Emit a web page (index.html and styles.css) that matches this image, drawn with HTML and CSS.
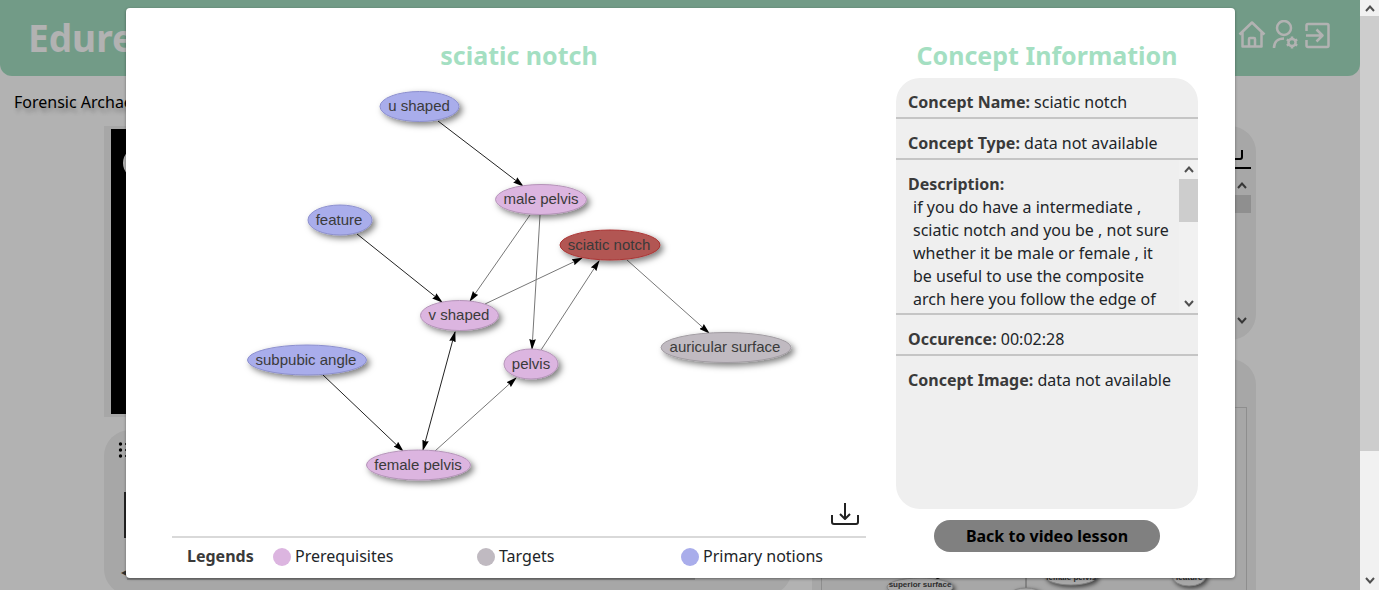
FILE: index.html
```html
<!DOCTYPE html>
<html lang="en">
<head>
<meta charset="utf-8">
<title>Edurell - sciatic notch</title>
<link rel="stylesheet" href="styles.css">
</head>
<body>
<div class="viewport">
  <div class="page">
    <header class="topbar">
      <div class="brand">Edurell</div>
      <nav class="topnav">
        <a href="#" aria-label="Home"><svg width="28" height="30" viewBox="0 0 28 30"><path d="M1.500 14.500L14 2.500l12.500 12M4.500 12v14.500h19V12M11 26.500v-7.500a1 1 0 0 1 1-1h4a1 1 0 0 1 1 1v7.500"/></svg></a>
        <a href="#" aria-label="Account settings"><svg width="28" height="30" viewBox="0 0 28 30"><circle cx="13" cy="8" r="7"/><path d="M3 28c0-6 4-9.500 10-9.500"/><circle cx="21" cy="22.500" r="3.600"/><path d="M21 16.500v2.500M21 26v2.500M15.800 19.500l2.200 1.200M24 24.300l2.200 1.200M15.800 25.500l2.200-1.200M24 20.700l2.200-1.200"/></svg></a>
        <a href="#" aria-label="Log out"><svg width="28" height="30" viewBox="0 0 28 30"><path d="M2.500 11V5.500a1.500 1.500 0 0 1 1.500-1.500h19a1.500 1.500 0 0 1 1.500 1.500v20a1.500 1.500 0 0 1-1.500 1.500h-19a1.500 1.500 0 0 1-1.500-1.500V20M2 15.500h16M12.500 9.500l6 6-6 6"/></svg></a>
      </nav>
    </header>
    <p class="lesson">Forensic Archaeology and Anthropology</p>
    <main class="columns">
      <div class="column">
        <section class="video"><div class="screen"><div class="avatar"></div></div></section>
        <section class="card transcript">
          <svg width="26" height="20" viewBox="0 0 26 20"><path class="list-lines" d="M7 4h18M7 10h18M7 16h18"/><circle cx="2.500" cy="4" r="1.700"/><circle cx="2.500" cy="10" r="1.700"/><circle cx="2.500" cy="16" r="1.700"/></svg>
          <div class="timeline"></div>
          <div class="hscroll"><span>◂</span><div class="hthumb"></div></div>
        </section>
      </div>
      <div class="column">
        <section class="card notes">
          <div class="notes-tools"><svg width="28" height="22" viewBox="0 0 28 22"><path d="M1 12v7a2 2 0 0 0 2 2h22a2 2 0 0 0 2-2v-7"/></svg></div>
          <div class="notes-body">
            <div class="scroll scroll-dim"><svg width="12" height="16" viewBox="0 0 12 16"><path d="M2 11l4-4.500 4 4.500"/></svg><div class="thumb"></div><svg width="12" height="16" viewBox="0 0 12 16"><path d="M2 6l4 4.500L10 6"/></svg></div>
          </div>
        </section>
        <section class="card map">
          <div class="map-frame">
            <svg class="minimap" viewBox="0 0 424 184" preserveAspectRatio="xMidYMin meet">
              <path d="M204 120v60" stroke="#888"/>
              <path d="M112 173l8-4-1-4z" fill="#000"/>
              <g class="mininode"><ellipse cx="98" cy="179" rx="33" ry="9"/><ellipse cx="204" cy="185" rx="14" ry="5"/><ellipse cx="249" cy="168" rx="26" ry="9"/><ellipse cx="367" cy="168" rx="17" ry="10"/></g>
              <text x="98" y="179">superior surface</text><text x="249" y="172">female pelvis</text><text x="367" y="172">feature</text>
            </svg>
          </div>
        </section>
      </div>
    </main>
    <div class="backdrop"></div>
    <div class="dialog" role="dialog" aria-labelledby="concept-title">
      <section class="graph-panel">
        <h2 id="concept-title">sciatic notch</h2>
        <svg class="graph" viewBox="172 78 694 418" role="img" aria-label="Concept graph">
          <defs>
            <marker id="arrow" viewBox="0 0 10 6" refX="9" refY="3" markerWidth="11" markerHeight="7" markerUnits="userSpaceOnUse" orient="auto-start-reverse"><path d="M0 0L10 3L0 6L1 3z" fill="#000"/></marker>
            <filter id="shadow" x="-20%" y="-30%" width="150%" height="190%"><feDropShadow dx="3" dy="3" stdDeviation="3" flood-opacity=".5"/></filter>
          </defs>
          <g class="edges" marker-end="url(#arrow)">
            <path class="strong" d="M438 121L523 186"/>
            <path class="strong" d="M357 234L442 302"/>
            <path class="strong" d="M323 375L403 451"/>
            <path class="strong both" d="M455 332L423 450"/>
            <path d="M530 215L470 301"/>
            <path d="M540 215L532 349"/>
            <path d="M485 304L582 258"/>
            <path d="M541 350L599 261"/>
            <path d="M435 451L516 378"/>
            <path d="M627 260L709 333"/>
          </g>
          <g class="nodes">
            <g class="primary"><ellipse cx="419.500" cy="106.500" rx="39.500" ry="15"/><ellipse cx="340" cy="220" rx="32" ry="15"/><ellipse cx="307" cy="360" rx="59.500" ry="15"/></g>
            <g class="prereq"><ellipse cx="541" cy="199.500" rx="45.500" ry="15"/><ellipse cx="459.500" cy="315.500" rx="39" ry="15"/><ellipse cx="531" cy="364" rx="27" ry="15"/><ellipse cx="418.500" cy="465" rx="52" ry="15"/></g>
            <g class="current"><ellipse cx="610" cy="245" rx="50" ry="15"/></g>
            <g class="target"><ellipse cx="726" cy="347.500" rx="65" ry="15"/></g>
          </g>
          <g class="labels">
            <text x="419" y="111">u shaped</text><text x="339" y="225">feature</text><text x="306" y="365">subpubic angle</text>
            <text x="541" y="204">male pelvis</text><text x="459" y="320">v shaped</text><text x="531" y="369">pelvis</text><text x="418" y="470">female pelvis</text>
            <text x="609" y="250">sciatic notch</text><text x="725" y="352">auricular surface</text>
          </g>
        </svg>
        <div class="graph-tools"><button class="download" aria-label="Download"><svg width="28" height="24" viewBox="0 0 28 24"><path d="M1 13v7a2 2 0 0 0 2 2h22a2 2 0 0 0 2-2v-7M14 1v15M9 12l5 5 5-5"/></svg></button></div>
        <div class="legend">
          <b>Legends</b>
          <span class="key"><i class="dot dot-prereq"></i>Prerequisites</span>
          <span class="key"><i class="dot dot-target"></i>Targets</span>
          <span class="key"><i class="dot dot-primary"></i>Primary notions</span>
        </div>
      </section>
      <section class="info-panel">
        <h2>Concept Information</h2>
        <div class="info">
          <div class="row"><b>Concept Name:</b> sciatic notch</div>
          <div class="row"><b>Concept Type:</b> data not available</div>
          <div class="row description">
            <div class="desc-text"><b>Description:</b><p>if you do have a intermediate ,<br>sciatic notch and you be , not sure<br>whether it be male or female , it<br>be useful to use the composite<br>arch here you follow the edge of</p></div>
            <div class="scroll"><svg width="12" height="16" viewBox="0 0 12 16"><path d="M2 11l4-4.500 4 4.500"/></svg><div class="thumb"></div><svg width="12" height="16" viewBox="0 0 12 16"><path d="M2 6l4 4.500L10 6"/></svg></div>
          </div>
          <div class="row"><b>Occurence:</b> 00:02:28</div>
          <div class="row"><b>Concept Image:</b> data not available</div>
        </div>
        <button class="back">Back to video lesson</button>
      </section>
    </div>
  </div>
  <div class="scroll window-scroll"><svg width="12" height="16" viewBox="0 0 12 16"><path d="M2 11l4-4.500 4 4.500"/></svg><div class="thumb"></div><svg width="12" height="16" viewBox="0 0 12 16"><path d="M2 6l4 4.500L10 6"/></svg></div>
</div>
</body>
</html>
```
FILE: styles.css
```css
* { box-sizing: border-box; }
body {
  margin: 0;
  font: 16px/23px "Noto Sans", "Open Sans", sans-serif;
  color: #212529;
  background: #fff;
}
h2, p { margin: 0; }
svg { display: block; fill: none; }
button { font: inherit; border: 0; padding: 0; cursor: pointer; }

.viewport { display: flex; height: 100vh; }
.page { position: relative; flex: 1; min-width: 0; overflow: hidden; display: flex; flex-direction: column; }

.topbar {
  display: flex;
  flex: none;
  justify-content: space-between;
  align-items: center;
  height: 76px;
  padding: 0 28px;
  background: #a4dfc2;
  border-radius: 0 0 12px 12px;
}
.brand { font-size: 37px; line-height: 52px; font-weight: 700; color: #fff; }
.topnav { display: flex; gap: 5px; padding-bottom: 6px; }
.topnav svg { stroke: #fff; stroke-width: 2.5; stroke-linejoin: round; }

.lesson { flex: none; padding: 15px 14px 12px; color: #000; text-shadow: 2px 4px 4px rgba(0, 0, 0, .3); }
.columns { flex: 1; min-height: 0; display: grid; grid-template-columns: 688fr 444fr; gap: 20px; padding: 0 104px; }
.column { display: flex; flex-direction: column; min-height: 0; }
.card { background: #efefef; border-radius: 26px; }
.video { padding: 3px 7px; height: 291px; flex: none; background: #efefef; }
.screen { height: 285px; padding: 18px 12px; background: #000; }
.avatar { width: 32px; height: 32px; border-radius: 50%; background: #fff; }
.transcript { flex: none; height: 165px; margin-top: 13px; padding: 10px 14px; }
.transcript svg { fill: #000; }
.transcript .list-lines { stroke: #000; stroke-width: 1.500; }
.timeline { height: 46px; margin: 32px 6px 0; border-left: 2px solid #333; }
.hscroll { display: flex; align-items: center; height: 17px; margin-top: 25px; padding-left: 3px; color: #444; font-size: 12px; }
.hthumb { width: 568px; height: 17px; background: #c1c1c1; }

.notes { flex: none; height: 214px; display: flex; flex-direction: column; padding: 20px 5px 10px 20px; }
.notes-tools { display: flex; justify-content: flex-end; padding: 0 8px 8px; border-bottom: 2px solid #000; height: 23px; }
.notes-tools svg { stroke: #000; stroke-width: 2; margin-top: -8px; }
.notes-body { flex: 1; display: flex; justify-content: flex-end; padding-top: 7px; }
.map { flex: 1; margin-top: 19px; padding: 48px 9px 0 9px; min-height: 0; overflow: hidden; border-radius: 26px 26px 0 0; }
.map-frame { height: 100%; border: 1px solid #ccc; border-bottom: 0; overflow: hidden; }
.mininode ellipse { fill: #efefef; stroke: #bbb; filter: drop-shadow(2px 2px 2px rgba(0, 0, 0, .6)); }
.minimap text { font: 700 8px "Liberation Sans", Arial, sans-serif; fill: #444; text-anchor: middle; }

.backdrop { position: absolute; inset: 0; background: rgba(0, 0, 0, .3); }
.dialog {
  position: absolute;
  inset: 8px 125px auto 126px;
  display: grid;
  grid-template-columns: 694fr 302fr;
  gap: 30px;
  padding: 31px 37px 10px 46px;
  background: #fff;
  border-radius: 4px;
  box-shadow: 0 1px 3px rgba(0, 0, 0, .4);
}
.dialog h2 { font-size: 25px; line-height: 32px; font-weight: 700; text-align: center; color: #a4dfc2; }
.dialog b { color: #3a3a3a; }

.graph { width: 100%; margin-top: 7px; }
.edges { stroke: #777; stroke-width: 1; }
.edges .strong { stroke: #222; }
.edges .both { marker-start: url(#arrow); }
.nodes > g { filter: url(#shadow); }
.nodes ellipse { stroke-width: 1; }
.primary { fill: #a9adeb; stroke: #8c8fce; }
.prereq { fill: #dcb5e0; stroke: #b493b8; }
.current { fill: #b25652; stroke: #a33; }
.target { fill: #c0bac1; stroke: #a19ca2; }
.labels text { font: 15px "Liberation Sans", Arial, sans-serif; fill: #3a3a3a; text-anchor: middle; }

.graph-tools { display: flex; justify-content: flex-end; padding: 6px 7px 10px; }
.download { background: none; }
.download svg { stroke: #222; stroke-width: 2; stroke-linejoin: round; }
.legend { display: grid; grid-template-columns: 86px 204px 204px auto; padding: 7px 0 0 15px; border-top: 2px solid #d9d9d9; }
.key { display: flex; align-items: center; gap: 4px; }
.dot { width: 18px; height: 18px; border-radius: 50%; }
.dot-prereq { background: #dcb5e0; }
.dot-target { background: #c0bac1; }
.dot-primary { background: #a9adeb; }

.info-panel { display: flex; flex-direction: column; }
.info { height: 431px; margin-top: 7px; background: #efefef; border-radius: 24px; overflow: hidden; white-space: nowrap; }
.row { padding: 13px 12px 3px; border-bottom: 2px solid #c5c5c5; }
.row:last-child { border-bottom: 0; }
.description { display: flex; padding: 0; height: 155px; }
.desc-text { flex: 1; min-width: 0; padding: 13px 0 0 12px; }
.desc-text p { padding-left: 5px; }

.scroll { flex: none; width: 19px; display: flex; flex-direction: column; align-items: center; background: #f1f1f1; }
.scroll svg { margin: 1px 0 2px; stroke: #505050; stroke-width: 2; }
.scroll svg:last-child { margin-top: auto; }
.scroll .thumb { width: 100%; height: 43px; background: #cdcdcd; }
.scroll-dim { background: none; }
.scroll-dim .thumb { height: 18px; background: #cdcdcd; }
.window-scroll { height: 100vh; }
.window-scroll svg { flex: none; }
.window-scroll svg:first-child { margin-top: 0; margin-bottom: 0; }
.window-scroll .thumb { height: 435px; }

.back { align-self: center; width: 75%; height: 32px; margin-top: 11px; border-radius: 16px; background: #808080; color: #000; font-weight: 700; }
```
